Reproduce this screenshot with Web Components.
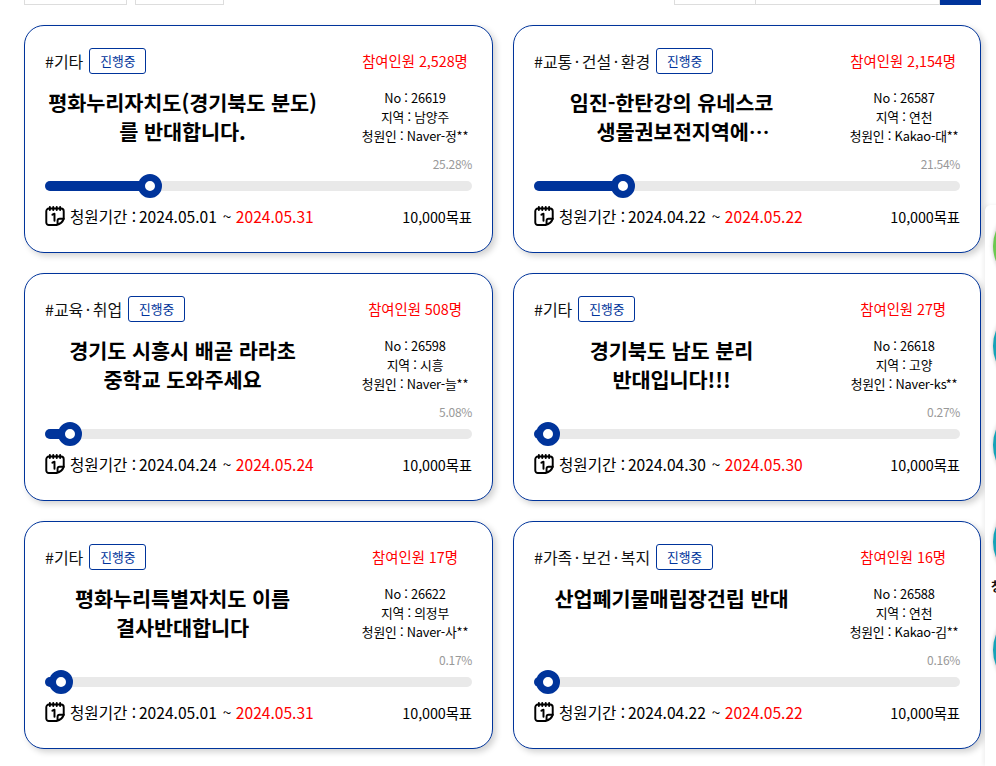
<!DOCTYPE html>
<html lang="ko"><head><meta charset="utf-8">
<style>
html,body{margin:0;padding:0;height:766px;overflow:hidden;background:#fff}
body{font-family:"Noto Sans CJK KR","Noto Sans",sans-serif;color:#000}
</style></head><body>
<petition-page>
<top-bar slot="top"></top-bar>
<petition-card tag="#기타" count="참여인원 2,528명" no="26619" region="남양주" author="Naver-정**" pct="25.28" knob="105" start="2024.05.01" end="2024.05.31">평화누리자치도(경기북도 분도)<br>를 반대합니다.</petition-card>
<petition-card tag="#교통·건설·환경" count="참여인원 2,154명" no="26587" region="연천" author="Kakao-대**" pct="21.54" knob="89" start="2024.04.22" end="2024.05.22">임진-한탄강의 유네스코<br><span style="margin-left:23px">생물권보전지역에…</span></petition-card>
<petition-card tag="#교육·취업" count="참여인원 508명" no="26598" region="시흥" author="Naver-늘**" pct="5.08" knob="25" start="2024.04.24" end="2024.05.24">경기도 시흥시 배곧 라라초<br>중학교 도와주세요</petition-card>
<petition-card tag="#기타" count="참여인원 27명" no="26618" region="고양" author="Naver-ks**" pct="0.27" knob="14" start="2024.04.30" end="2024.05.30">경기북도 남도 분리<br>반대입니다!!!</petition-card>
<petition-card tag="#기타" count="참여인원 17명" no="26622" region="의정부" author="Naver-사**" pct="0.17" knob="16" start="2024.05.01" end="2024.05.31">평화누리특별자치도 이름<br>결사반대합니다</petition-card>
<petition-card tag="#가족·보건·복지" count="참여인원 16명" no="26588" region="연천" author="Kakao-김**" pct="0.16" knob="14" start="2024.04.22" end="2024.05.22">산업폐기물매립장건립 반대</petition-card>
<side-rail slot="rail"></side-rail>
</petition-page>
<script>
customElements.define('petition-page',class extends HTMLElement{constructor(){super();this.attachShadow({mode:'open'}).innerHTML=`<style>
:host{display:block;position:relative;width:996px;height:766px;overflow:hidden}
.wrap{display:flex;flex-direction:column;gap:20px;padding:0 15px 0 24px}
.grid{display:grid;grid-template-columns:469px 468px;grid-auto-rows:228px;gap:20px}
</style><div class="wrap"><slot name="top"></slot><div class="grid"><slot></slot></div></div><slot name="rail"></slot>`}});
customElements.define('top-bar',class extends HTMLElement{constructor(){super();this.attachShadow({mode:'open'}).innerHTML=`<style>
:host{display:flex;height:5px;justify-content:space-between}
.g{display:flex;gap:8px}
.b{box-sizing:border-box;height:5px;border:1px solid #ddd;border-top:0}
.a{width:103px}.c{width:89px}
.r{display:flex}.d{width:81px;border-right:0}.e{width:185px}.f{width:41px;height:5px;background:#00349b}
</style><div class="g"><div class="b a"></div><div class="b c"></div></div><div class="r"><div class="b d"></div><div class="b e"></div><div class="f"></div></div>`}});
customElements.define('petition-card',class extends HTMLElement{constructor(){super();
const a=n=>this.getAttribute(n);const k=a('knob');
const tag=a('tag').split('·').join('<span class="dot">·</span>');
this.attachShadow({mode:'open'}).innerHTML=`<style>
:host{display:block;box-sizing:border-box;height:228px;border:1px solid #00349b;border-radius:20px;background:#fff;box-shadow:3px 3px 6px rgba(0,0,0,.18);padding:21px 20px 0 20px}
.head{display:flex;align-items:center;height:28px}
.tagw{display:flex;align-items:center;gap:6px;font-size:16px;color:#111;line-height:22px;width:300px;white-space:nowrap}
.dot{padding:0 2.5px}
.st{box-sizing:border-box;height:26px;width:57px;border:1px solid #00349b;border-radius:3px;color:#00349b;font-size:12.8px;display:flex;align-items:center;justify-content:center;flex:none}
.cnt{color:#f00;font-size:14.4px;letter-spacing:-.05px;width:140px;margin-left:auto;margin-right:-13px;text-align:center;white-space:nowrap;margin-top:-1px}
.mid{display:flex;height:84px;margin-top:10px}
.title{width:275px;flex:none;text-align:center;font-size:20.8px;font-weight:700;line-height:29px;padding-top:3px;letter-spacing:-.1px}
.info{width:140px;margin-left:25px;flex:none;text-align:center;font-size:12.8px;line-height:19px;letter-spacing:-.2px;white-space:nowrap;padding-top:3px}
.pct{text-align:right;font-size:12px;color:#999;line-height:16px;height:16px;margin-top:-13px;letter-spacing:-.3px}
.bar{position:relative;height:10px;border-radius:5px;background:#e9e9e9;margin-top:9px}
.fill{height:10px;border-radius:5px 0 0 5px;background:#00349b}
.knob{position:absolute;top:-7px;box-sizing:border-box;width:24px;height:24px;border-radius:50%;border:7px solid #00349b;background:#fff;margin-left:-12px}
.foot{display:flex;justify-content:space-between;align-items:center;margin-top:13px;font-size:15.6px;height:24px}
.d{display:flex;align-items:center;gap:5px;white-space:nowrap}
.foot svg{display:block;width:20px;height:20px;flex:none;margin-top:-1px}
.lab{margin-right:-1.5px}
.til{margin-left:1.5px}
.red{color:#f00}
.goal{font-size:14.4px;letter-spacing:-.1px}
</style>
<div class="head"><div class="tagw"><span>${tag}</span><span class="st">진행중</span></div><div class="cnt">${a('count')}</div></div>
<div class="mid"><div class="title"><slot></slot></div><div class="info"><div>No : ${a('no')}</div><div>지역 : ${a('region')}</div><div>청원인 : ${a('author')}</div></div></div>
<div class="pct">${a('pct')}%</div>
<div class="bar"><div class="fill" style="width:${k}px"></div><div class="knob" style="left:${k}px"></div></div>
<div class="foot"><div class="d"><svg viewBox="0.500 0 19 19.500" fill="none" stroke="#000" stroke-width="1.900" stroke-linecap="round" stroke-linejoin="round"><path d="M11.500 18.500H4a2.500 2.500 0 0 1-2.500-2.500V5A2.500 2.500 0 0 1 4 2.500h12A2.500 2.500 0 0 1 18.500 5v7.500c-1 3-3.500 5-7 6"/><path d="M5 1v3M8.300 1v3M11.700 1v3M15 1v3"/><path d="M7.500 8.500l2-1v7"/><path d="M18.500 12.500H14.500a2 2 0 0 0-2 2v3"/></svg><span><span class="lab">청원기간 : </span>${a('start')} <span class="til">~</span> <span class="red">${a('end')}</span></span></div><div class="goal">10,000목표</div></div>`}});
customElements.define('side-rail',class extends HTMLElement{constructor(){super();this.attachShadow({mode:'open'}).innerHTML=`<style>
:host{position:absolute;left:985px;top:205px;width:30px;height:561px;background:#fff;border-radius:6px 0 0 0;box-shadow:-2px 0 4px rgba(0,0,0,.06)}
i{position:absolute;left:8px;width:80px;height:80px;border-radius:50%;box-sizing:border-box;box-shadow:0 0 4px rgba(0,0,0,.25);background:#fff}
b{position:absolute;left:6px;top:372px;font:700 13px/18px "Noto Sans CJK KR",sans-serif;color:#111}
</style><i style="top:1px;background:#6cc94f"></i><i style="top:101px;border:5px solid #14a3b8"></i><i style="top:200px;border:5px solid #14a3b8"></i><i style="top:297px;border:5px solid #14a3b8"></i><b>청</b><i style="top:405px;border:5px solid #14a3b8"></i>`}});
</script></body></html>
